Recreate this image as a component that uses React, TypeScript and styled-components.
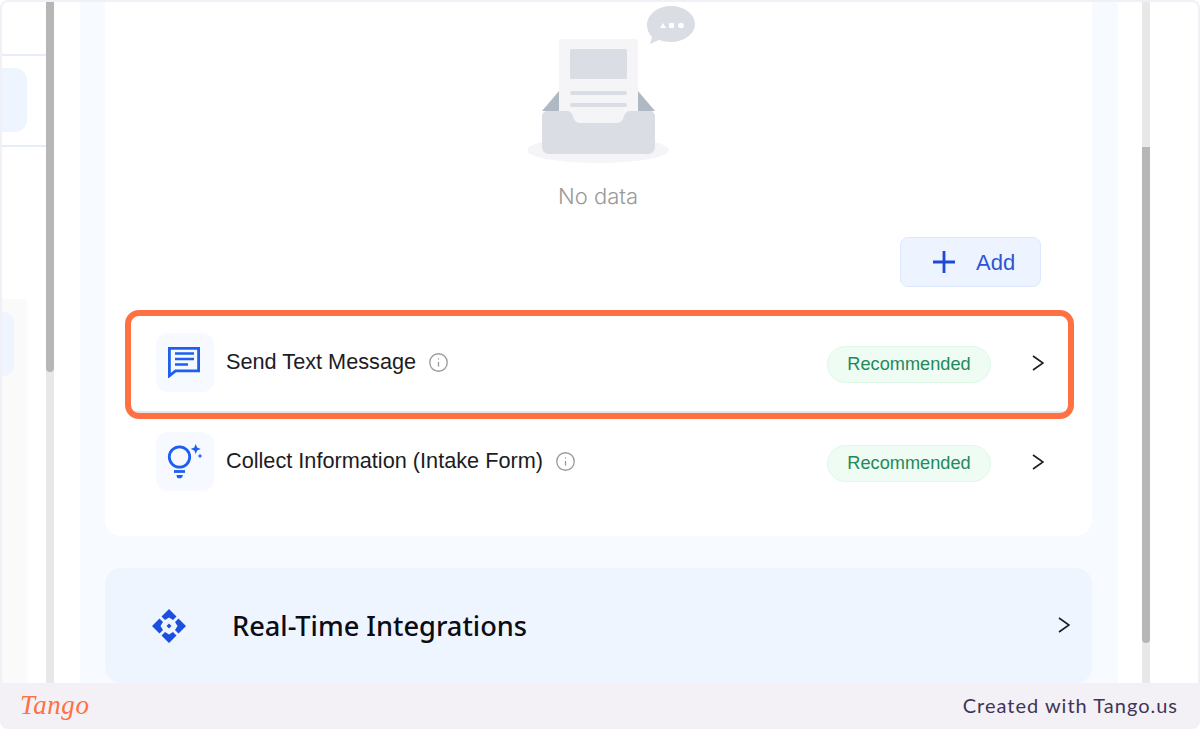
import React from 'react';
import styled, { createGlobalStyle } from 'styled-components';
import { Info } from 'lucide-react';

const GlobalStyle = createGlobalStyle`
    html, body {
        margin: 0;
        padding: 0;
        background: #fff;
    }
    * {
        box-sizing: border-box;
    }
`;

const Page = styled.div`
    width: 1200px;
    height: 729px;
    display: flex;
    flex-direction: column;
    overflow: hidden;
    font-family: 'Liberation Sans', Arial, sans-serif;
`;

const Frame = styled.div`
    height: 683px;
    display: flex;
    border: 2px solid #f2f0f7;
    border-bottom: none;
    border-radius: 8px 8px 0 0;
    overflow: hidden;
    background: #fff;
`;

const SidePanel = styled.div`
    width: 44px;
    flex-shrink: 0;
`;

const SideHeader = styled.div`
    height: 54px;
    border-bottom: 2px solid #e7ecfb;
`;

const SideSection = styled.div`
    height: 91px;
    padding-top: 12px;
    border-bottom: 2px solid #e7ecfb;
`;

const SideTab = styled.div`
    width: 25px;
    height: 64px;
    background: #eef5fe;
    border-radius: 0 12px 12px 0;
`;

const SideGroup = styled.div`
    width: 25px;
    height: 385px;
    margin-top: 152px;
    padding-top: 13px;
    background: #fafafa;
`;

const SideGroupTab = styled.div`
    width: 12px;
    height: 64px;
    background: #eef5fe;
    border-radius: 0 10px 10px 0;
`;

const Track = styled.div`
    width: 8px;
    flex-shrink: 0;
    background: #e8e8e8;
`;

const Thumb = styled.div<{ $top: number; $height: number }>`
    width: 8px;
    height: ${(p) => p.$height}px;
    margin-top: ${(p) => p.$top}px;
    background: #b6b6b6;
    border-radius: 0 0 4px 4px;
`;

const Main = styled.div`
    width: 1038px;
    flex-shrink: 0;
    margin: 0 24px 0 26px;
    padding: 0 26px 0 25px;
    background: #f7fafe;
`;

const Card = styled.div`
    height: 534px;
    padding: 0 24px 0 26px;
    background: #fff;
    border-radius: 0 0 16px 16px;
`;

const Empty = styled.div`
    display: flex;
    flex-direction: column;
    align-items: center;
    padding-right: 3px;
`;

const EmptyArtSvg = styled.svg`
    display: block;
    margin-left: 30px;
`;

const EmptyText = styled.div`
    margin-top: 15px;
    font-size: 22px;
    line-height: 30px;
    color: #999;
    font-family: Inter, 'Liberation Sans', sans-serif;
    font-weight: 300;
`;

const AddRow = styled.div`
    display: flex;
    justify-content: flex-end;
    padding-right: 27px;
    margin-top: 26px;
    margin-bottom: 27px;
`;

const AddButton = styled.button`
    width: 141px;
    height: 50px;
    display: flex;
    align-items: center;
    gap: 20px;
    padding: 0 0 0 31px;
    background: #eef4ff;
    border: 1.5px solid #dbe8fd;
    border-radius: 8px;
    color: #2f55d4;
    font-family: inherit;
    font-size: 22px;
`;

const AddLabel = styled.span`
    margin-top: 2px;
`;

const Row = styled.div<{ $divided?: boolean }>`
    position: relative;
    height: 99px;
    display: flex;
    align-items: center;
    padding: 0 24px 0 25px;
    border-bottom: 2px solid ${(p) => (p.$divided ? '#e8e8e8' : 'transparent')};
`;

const Highlight = styled.div`
    position: absolute;
    left: -6px;
    right: -6px;
    top: -4px;
    bottom: -8px;
    border: 6px solid #ff7142;
    border-radius: 14px;
    pointer-events: none;
`;

const IconTile = styled.div`
    width: 58px;
    height: 59px;
    margin-top: -1px;
    display: flex;
    align-items: center;
    justify-content: center;
    background: #f6f9ff;
    border-radius: 12px;
    margin-right: 12px;
    flex-shrink: 0;
`;

const RowTitle = styled.span`
    margin-top: -2px;
    font-size: 21.7px;
    color: #1c1c24;
`;

const InfoIcon = styled(Info)`
    margin-left: 12px;
    color: #9a9a9a;
    flex-shrink: 0;
`;

const Pill = styled.span`
    margin-left: auto;
    margin-top: 4px;
    width: 164px;
    height: 37px;
    display: flex;
    align-items: center;
    justify-content: center;
    font-size: 18.2px;
    color: #23895a;
    background: #effcf4;
    border: 1.5px solid #dff8e8;
    border-radius: 19px;
`;

const Chevron = styled.svg<{ $gap: number; $lift: number }>`
    margin-left: ${(p) => p.$gap}px;
    margin-top: ${(p) => p.$lift}px;
    flex-shrink: 0;
`;

const IntegrationCard = styled.div`
    height: 115px;
    margin-top: 32px;
    display: flex;
    align-items: center;
    padding: 0 22px 0 47px;
    background: #eef5fe;
    border-radius: 16px;
`;

const IntegrationTitle = styled.span`
    margin-left: 46px;
    margin-top: -1px;
    font-family: 'Noto Sans', sans-serif;
    font-size: 27.2px;
    font-weight: 500;
    color: #0c0c14;
    flex: 1;
`;

const RightSpace = styled.div`
    flex: 1;
`;

const Footer = styled.div`
    height: 46px;
    display: flex;
    align-items: center;
    justify-content: space-between;
    padding: 0 22px 2px 20px;
    background: #f3f0f6;
    border-radius: 0 0 8px 8px;
`;

const Brand = styled.span`
    font-family: 'Liberation Serif', serif;
    font-style: italic;
    font-size: 27px;
    color: #ff7142;
    letter-spacing: 0.6px;
`;

const Credit = styled.span`
    font-family: Lato, sans-serif;
    font-size: 20px;
    letter-spacing: 1px;
    color: #3f3557;
`;

const EmptyArt = () => (
    <EmptyArtSvg width="170" height="164" viewBox="528 2 170 164">
        <ellipse cx="598" cy="150" rx="71" ry="13" fill="#f5f5f7" />
        <path d="M671 6c-13 0-24 8-24 19 0 5 2 9 5 12l-2 7 9-4c4 1 8 2 12 2 13 0 24-8 24-18S684 6 671 6z" fill="#dadde4" />
        <path d="M660 28l3-5 3 5z" fill="#fff" />
        <rect x="669" y="23" width="5" height="5" rx="1" fill="#fff" />
        <circle cx="681" cy="25.500" r="2.800" fill="#fff" />
        <path d="M559 91l-17 20h113l-17-20z" fill="#aeb9c3" />
        <path d="M561 39h75a2 2 0 0 1 2 2v82h-79V41a2 2 0 0 1 2-2z" fill="#f5f5f7" />
        <rect x="570" y="49" width="57" height="30" rx="1.500" fill="#dadde4" />
        <rect x="570" y="91" width="57" height="4" rx="2" fill="#dadde4" />
        <rect x="570" y="103" width="57" height="4" rx="2" fill="#dadde4" />
        <path d="M542 116a5 5 0 0 1 5-5h20c3 0 5 2 6 5 1 4 3 7 7 7h37c4 0 6-3 7-7 1-3 3-5 6-5h20a5 5 0 0 1 5 5v31a7 7 0 0 1-7 7H549a7 7 0 0 1-7-7z" fill="#dadde4" />
    </EmptyArtSvg>
);

const MessageIcon = () => (
    <svg width="32" height="31" viewBox="0 0 32 31" fill="none" stroke="#1e5ff0" style={{ marginRight: 2 }}>
        <path d="M1.400 1.400h29.200v22.400H7.500l-6.100 5z" strokeWidth="2.800" />
        <path d="M7 6.500h19M7 12h19M7 17.500h13" strokeWidth="2.600" />
    </svg>
);

const BulbIcon = () => (
    <svg width="38" height="38" viewBox="0 0 38 38" fill="none">
        <circle cx="13.500" cy="15" r="10.200" stroke="#1e5ff0" strokeWidth="2.800" />
        <path d="M8 29.500h11" stroke="#1e5ff0" strokeWidth="2.800" />
        <path d="M10.500 33h6.500l-1 2.500-1.500.8h-2.500l-1-.8z" fill="#1e5ff0" />
        <path d="M29.700 2l1.400 3.600 3.600 1.400-3.600 1.400-1.400 3.600-1.400-3.600-3.600-1.400 3.600-1.400z" fill="#1e5ff0" />
        <path d="M34 11.500l.8 1.700 1.700.8-1.700.8-.8 1.700-.8-1.700-1.700-.8 1.700-.8z" fill="#1e5ff0" />
    </svg>
);

const DiamondIcon = () => (
    <svg width="34" height="34" viewBox="0 0 34 34" fill="#1b4fe0">
        <path d="M17 0l7.500 7.500-3.500 3.500-4-2.500-4 2.500-3.500-3.500z" />
        <path d="M17 34l-7.500-7.500 3.500-3.500 4 2.500 4-2.500 3.500 3.500z" />
        <path d="M0 17l7.500-7.500 3.500 3.500-2.500 4 2.500 4-3.500 3.500z" />
        <path d="M34 17l-7.500-7.500-3.500 3.500 2.500 4-2.500 4 3.500 3.500z" />
        <path d="M17 14.500l2.500 2.500-2.500 2.500-2.500-2.500z" />
    </svg>
);

const ChevronIcon = ({ gap, lift }: { gap: number; lift: number }) => (
    <Chevron $gap={gap} $lift={lift} width="12" height="16" viewBox="0 0 12 16" fill="none" stroke="#1c1c24" strokeWidth="1.600">
        <path d="M1 1l10 7-10 7" />
    </Chevron>
);

const rows = [
    { title: 'Send Text Message', icon: <MessageIcon />, active: true },
    { title: 'Collect Information (Intake Form)', icon: <BulbIcon />, active: false },
];

export default function App() {
    return (
        <Page>
            <GlobalStyle />
            <Frame>
                <SidePanel>
                    <SideHeader />
                    <SideSection>
                        <SideTab />
                    </SideSection>
                    <SideGroup>
                        <SideGroupTab />
                    </SideGroup>
                </SidePanel>
                <Track>
                    <Thumb $top={0} $height={370} />
                </Track>
                <Main>
                    <Card>
                        <Empty>
                            <EmptyArt />
                            <EmptyText>No data</EmptyText>
                        </Empty>
                        <AddRow>
                            <AddButton>
                                <svg width="24" height="24" viewBox="0 0 24 24" stroke="#1d48d8" strokeWidth="2.800">
                                    <path d="M12 1v22M1 12h22" />
                                </svg>
                                <AddLabel>Add</AddLabel>
                            </AddButton>
                        </AddRow>
                        {rows.map((row) => (
                            <Row key={row.title} $divided={row.active}>
                                <IconTile>{row.icon}</IconTile>
                                <RowTitle>{row.title}</RowTitle>
                                <InfoIcon size={21} strokeWidth={1.5} />
                                <Pill>Recommended</Pill>
                                <ChevronIcon gap={41} lift={0} />
                                {row.active ? <Highlight /> : null}
                            </Row>
                        ))}
                    </Card>
                    <IntegrationCard>
                        <DiamondIcon />
                        <IntegrationTitle>Real-Time Integrations</IntegrationTitle>
                        <ChevronIcon gap={0} lift={-1} />
                    </IntegrationCard>
                </Main>
                <Track>
                    <Thumb $top={145} $height={496} />
                </Track>
                <RightSpace />
            </Frame>
            <Footer>
                <Brand>Tango</Brand>
                <Credit>Created with Tango.us</Credit>
            </Footer>
        </Page>
    );
}
